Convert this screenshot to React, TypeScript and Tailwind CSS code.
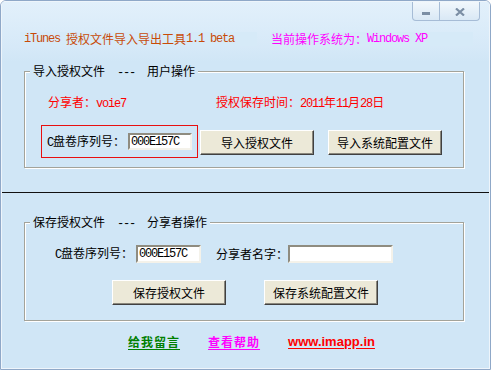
import React from "react";

const M = ({ children }: { children: React.ReactNode }) => (
  <span className="font-['Liberation_Mono',monospace] text-[12px] tracking-[-1.2px]">{children}</span>
);

const Btn = ({ children, className = "" }: { children: React.ReactNode; className?: string }) => (
  <div
    className={
      "flex h-[25px] w-[114px] items-center justify-center border border-t-white border-l-white border-b-[#404040] border-r-[#404040] bg-[#ece9d8] text-black shadow-[inset_-1px_-1px_0_#8a877c] " +
      className
    }
  >
    {children}
  </div>
);

const Input = ({ value, className = "" }: { value?: string; className?: string }) => (
  <div
    className={
      "flex items-center border-2 border-t-[#8f8c80] border-l-[#8f8c80] border-b-[#f4f2ea] border-r-[#f4f2ea] bg-white pl-[1px] text-black " +
      className
    }
  >
    {value ? <M>{value}</M> : null}
  </div>
);

export default function App() {
  return (
    <div className="h-[370px] w-[491px] overflow-hidden rounded-t-[6px] border border-[#8fa8c8] bg-[#d0e6f6] font-['Noto_Sans_CJK_SC',sans-serif] text-[12px] leading-[16px] text-black">
      <div className="flex h-full flex-col border border-[#eef5fb] bg-[linear-gradient(to_bottom,#e2f0fb_0px,#d6e9f8_45px,#d0e6f6_60px,#d0e6f6_100%)]">
        {/* caption buttons */}
        <div className="flex h-[19px] shrink-0 justify-end pr-[9px]">
          <div className="flex h-[19px] w-[28px] items-center justify-center rounded-bl-[4px] border border-t-0 border-[#a6bcd6] bg-[linear-gradient(to_bottom,#f1f7fc,#d9e8f5)]">
            <div className="mt-[4px] h-[3px] w-[8px] bg-[#7b8ea4]" />
          </div>
          <div className="flex h-[19px] w-[40px] items-center justify-center rounded-br-[4px] border border-l-0 border-t-0 border-[#a6bcd6] bg-[linear-gradient(to_bottom,#f1f7fc,#d9e8f5)]">
            <svg width="10" height="8" viewBox="0 0 10 8" className="mt-[1px]">
              <path d="M1 0.5 L9 7.5 M9 0.5 L1 7.5" stroke="#7b8ea4" strokeWidth="2.2" />
            </svg>
          </div>
        </div>

        {/* title row */}
        <div className="mt-[11px] flex h-[14px] shrink-0 leading-[14px]">
          <div className="ml-[18px] flex h-[14px] w-[237px] items-center whitespace-pre bg-[#d6eaf8] pl-[4px] text-[#c84a08]">
            <M>iTunes </M>授权文件导入导出工具<M>1.1 beta</M>
          </div>
          <div className="ml-[14px] flex h-[14px] w-[202px] items-center whitespace-pre bg-[#d6eaf8] text-[#ff00ff]">
            当前操作系统为：<M>Windows XP</M>
          </div>
        </div>

        {/* group 1 */}
        <div className="relative ml-[22px] mt-[25px] h-[97px] w-[440px] shrink-0 border border-[#a3a39a] shadow-[1px_1px_0_#fff,inset_1px_1px_0_#fff]">
          <div className="absolute left-[5px] top-[-9px] whitespace-pre bg-[#d0e6f6] px-[3px]">
            导入授权文件<M>  ---  </M>用户操作
          </div>
          <div className="flex pl-[23px] pt-[22px] text-[#ff0000]">
            <div className="whitespace-pre">
              分享者：<M>voie7</M>
            </div>
            <div className="ml-[90px] whitespace-pre">
              授权保存时间：<M>2011</M>年<M>11</M>月<M>28</M>日
            </div>
          </div>
          <div className="mt-[13px] flex items-start pl-[16px]">
            <div className="flex h-[33px] w-[157px] items-center border border-solid border-[color:#e81010] pl-[5px]">
              <span className="whitespace-pre">
                <M>C</M>盘卷序列号：
              </span>
              <Input value="000E157C" className="ml-[3px] h-[17px] w-[64px]" />
            </div>
            <Btn className="ml-[2px] mt-[5px]">导入授权文件</Btn>
            <Btn className="ml-[14px] mt-[5px]">导入系统配置文件</Btn>
          </div>
        </div>

        {/* separator */}
        <div className="mt-[24px] h-[1px] w-full shrink-0 bg-[#111]" />

        {/* group 2 */}
        <div className="relative ml-[22px] mt-[29px] h-[99px] w-[440px] shrink-0 border border-[#a3a39a] shadow-[1px_1px_0_#fff,inset_1px_1px_0_#fff]">
          <div className="absolute left-[5px] top-[-9px] whitespace-pre bg-[#d0e6f6] px-[3px]">
            保存授权文件<M>  ---  </M>分享者操作
          </div>
          <div className="mt-[22px] flex h-[18px] items-center pl-[30px]">
            <span className="whitespace-pre">
              <M>C</M>盘卷序列号：
            </span>
            <Input value="000E157C" className="ml-[3px] h-[18px] w-[65px]" />
            <span className="ml-[15px]">分享者名字：</span>
            <Input className="ml-[0px] h-[18px] w-[105px]" />
          </div>
          <div className="mt-[17px] flex pl-[87px]">
            <Btn>保存授权文件</Btn>
            <Btn className="ml-[38px]">保存系统配置文件</Btn>
          </div>
        </div>

        {/* links */}
        <div className="mt-[13px] flex pl-[126px] font-bold">
          <span className="tracking-[1px] text-[#008000] underline underline-offset-[2px]">给我留言</span>
          <span className="ml-[28px] tracking-[1px] text-[#ff00ff] underline underline-offset-[2px]">查看帮助</span>
          <span className="ml-[28px] font-['Liberation_Sans',sans-serif] text-[13px] text-[#ff0000] underline underline-offset-[2px]">
            www.imapp.in
          </span>
        </div>
      </div>
    </div>
  );
}
